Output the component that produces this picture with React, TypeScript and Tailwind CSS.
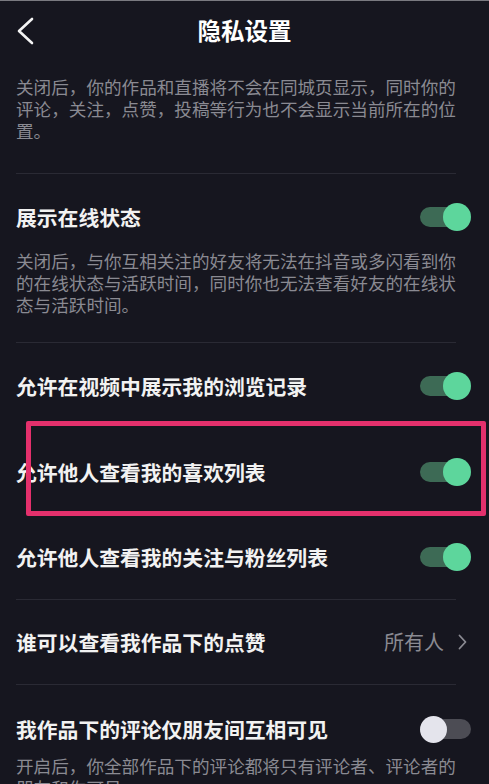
import React from "react";

const font = { fontFamily: '"Noto Sans CJK SC", "Noto Sans", sans-serif' };

function Toggle({ on }: { on: boolean }) {
  return on ? (
    <div className="relative w-[51px] h-[28px] flex items-center">
      <div className="absolute left-0 right-[2px] h-[20px] rounded-full bg-[#3d6a55]" />
      <div className="absolute right-0 w-[28px] h-[28px] rounded-full bg-[#5dd69c]" />
    </div>
  ) : (
    <div className="relative w-[51px] h-[28px] flex items-center">
      <div className="absolute left-[2px] right-0 h-[20px] rounded-full bg-[#4c4c54]" />
      <div className="absolute left-0 w-[27px] h-[27px] rounded-full bg-[#e4e4ec]" />
    </div>
  );
}

function Divider() {
  return <div className="ml-4 mr-[33px] h-px bg-[#2a2a34]" />;
}

function Desc({ children }: { children: React.ReactNode }) {
  return (
    <p className="w-[448px] text-[17.6px] leading-[22px] text-[#8a8a92]">{children}</p>
  );
}

function Title({ children }: { children: React.ReactNode }) {
  return (
    <span className="text-[20.8px] leading-[28px] font-bold text-[#f2f2f2]">{children}</span>
  );
}

export default function App() {
  return (
    <div className="relative w-[489px] h-[784px] overflow-hidden bg-[#16161f]" style={font}>
      <div className="h-px bg-[#7a7a80]" />
      <div className="relative h-[59px] flex items-center justify-center">
        <svg className="absolute left-[15px] top-[16px]" width="20" height="28" viewBox="0 0 20 28">
          <polyline points="17,2 4,14 17,26" fill="none" stroke="#f4f4f4" strokeWidth="2.6" strokeLinecap="round" strokeLinejoin="round" />
        </svg>
        <span className="text-[23.5px] font-bold text-white">隐私设置</span>
      </div>
      <div className="pl-4 pt-4 pb-[31px]">
        <Desc>关闭后，你的作品和直播将不会在同城页显示，同时你的评论，关注，点赞，投稿等行为也不会显示当前所在的位置。</Desc>
      </div>
      <Divider />
      <div className="pl-4 pr-[18px] pt-[29px] pb-[26px]">
        <div className="flex items-center justify-between">
          <Title>展示在线状态</Title>
          <Toggle on />
        </div>
        <div className="mt-[19px]">
          <Desc>关闭后，与你互相关注的好友将无法在抖音或多闪看到你的在线状态与活跃时间，同时你也无法查看好友的在线状态与活跃时间。</Desc>
        </div>
      </div>
      <Divider />
      <div className="h-[86px] pl-4 pr-[18px] flex items-center justify-between">
        <Title>允许在视频中展示我的浏览记录</Title>
        <Toggle on />
      </div>
      <div className="relative h-[86px] pl-4 pr-[18px] flex items-center justify-between">
        <Title>允许他人查看我的喜欢列表</Title>
        <Toggle on />
        <div className="absolute left-[26px] top-[-8px] w-[460px] h-[95px] border-[5px] border-[#e4306c] rounded-[2px]" />
      </div>
      <div className="h-[84px] pl-4 pr-[18px] flex items-center justify-between">
        <Title>允许他人查看我的关注与粉丝列表</Title>
        <Toggle on />
      </div>
      <Divider />
      <div className="h-[84px] pl-4 pr-[22px] flex items-center justify-between">
        <Title>谁可以查看我作品下的点赞</Title>
        <div className="flex items-center gap-[14px]">
          <span className="text-[20px] text-[#8a8a92]">所有人</span>
          <svg width="9" height="16" viewBox="0 0 9 16">
            <polyline points="1.5,1.5 7.5,8 1.5,14.5" fill="none" stroke="#8a8a92" strokeWidth="1.8" strokeLinecap="round" strokeLinejoin="round" />
          </svg>
        </div>
      </div>
      <Divider />
      <div className="pl-4 pr-[18px] pt-[30px]">
        <div className="flex items-center justify-between">
          <Title>我作品下的评论仅朋友间互相可见</Title>
          <Toggle on={false} />
        </div>
        <div className="mt-[12px]">
          <Desc>开启后，你全部作品下的评论都将只有评论者、评论者的朋友和你可见。</Desc>
        </div>
      </div>
    </div>
  );
}
